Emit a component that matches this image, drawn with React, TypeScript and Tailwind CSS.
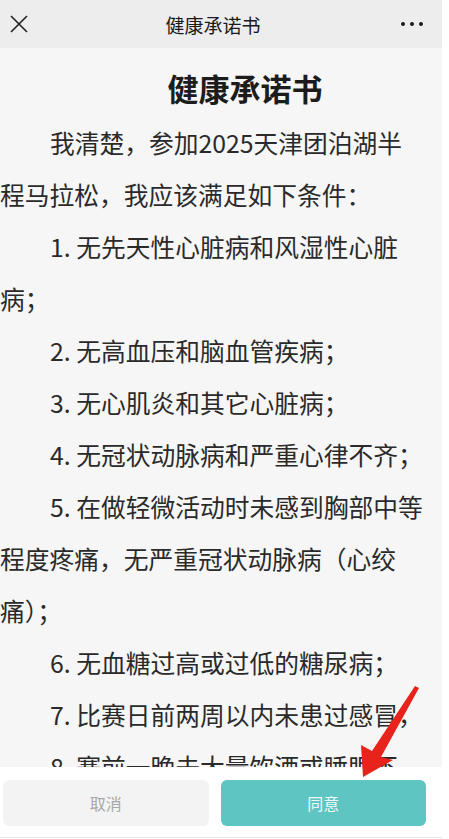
import React from "react";

const lines: { text: string; indent: boolean }[] = [
  { text: "我清楚，参加2025天津团泊湖半", indent: true },
  { text: "程马拉松，我应该满足如下条件：", indent: false },
  { text: "1. 无先天性心脏病和风湿性心脏", indent: true },
  { text: "病；", indent: false },
  { text: "2. 无高血压和脑血管疾病；", indent: true },
  { text: "3. 无心肌炎和其它心脏病；", indent: true },
  { text: "4. 无冠状动脉病和严重心律不齐；", indent: true },
  { text: "5. 在做轻微活动时未感到胸部中等", indent: true },
  { text: "程度疼痛，无严重冠状动脉病（心绞", indent: false },
  { text: "痛）；", indent: false },
  { text: "6. 无血糖过高或过低的糖尿病；", indent: true },
  { text: "7. 比赛日前两周以内未患过感冒，", indent: true },
  { text: "8. 赛前一晚未大量饮酒或睡眠不", indent: true },
];

export default function App() {
  return (
    <div
      className="relative w-[449px] h-[839px] bg-white overflow-hidden"
      style={{ fontFamily: '"Noto Sans CJK SC", "Noto Sans", sans-serif' }}
    >
      <div className="w-[442px] h-[839px] flex flex-col">
        {/* Header */}
        <div className="h-[48px] bg-[#ededed] flex items-center shrink-0">
          <div className="w-[44px] h-full flex items-center pl-[9px]">
            <svg width="20" height="20" viewBox="0 0 20 20">
              <path d="M2 2 L18 18 M18 2 L2 18" stroke="#1f1f1f" strokeWidth="1.6" fill="none" />
            </svg>
          </div>
          <div className="flex-1 text-center text-[19px] text-[#1a1a1a] leading-none">健康承诺书</div>
          <div className="w-[60px] h-full flex items-center pl-[19px] gap-[5px]">
            <span className="w-[4px] h-[4px] rounded-full bg-[#1a1a1a]" />
            <span className="w-[4px] h-[4px] rounded-full bg-[#1a1a1a]" />
            <span className="w-[4px] h-[4px] rounded-full bg-[#1a1a1a]" />
          </div>
        </div>

        {/* Body */}
        <div className="h-[719px] bg-[#f6f6f6] overflow-hidden pt-[20px] shrink-0">
          <div className="text-center pl-[48px] text-[31px] leading-[40px] font-bold text-[#1c1c1c]">健康承诺书</div>
          <div className="mt-[8px] text-[24.75px] leading-[52px] text-[#2a2a2a]">
            {lines.map((l, i) => (
              <div key={i} className={l.indent ? "whitespace-nowrap pl-[50px]" : "whitespace-nowrap"}>
                {l.text}
              </div>
            ))}
          </div>
        </div>

        {/* Bottom bar */}
        <div className="flex-1 bg-white flex flex-col">
          <div className="flex pl-[3px] pr-[16px] gap-[12px] pt-[13px]">
            <div className="flex-1 h-[46px] rounded-[6px] bg-[#f3f3f3] flex items-center justify-center text-[16px] text-[#a8a8a8]">
              取消
            </div>
            <div className="flex-1 h-[46px] rounded-[6px] bg-[#5fc5c3] flex items-center justify-center text-[16px] text-[#eefafa]">
              同意
            </div>
          </div>
          <div className="mt-[11px] h-[1px] bg-[#e6e6e6]" />
        </div>
      </div>

      {/* Red arrow overlay */}
      <svg className="absolute left-0 top-0 pointer-events-none" width="449" height="839" viewBox="0 0 449 839">
        <polygon
          points="363,777 361,745 372,751 415,686 419,688 381,757 393,760"
          fill="#e8231c"
        />
      </svg>
    </div>
  );
}
